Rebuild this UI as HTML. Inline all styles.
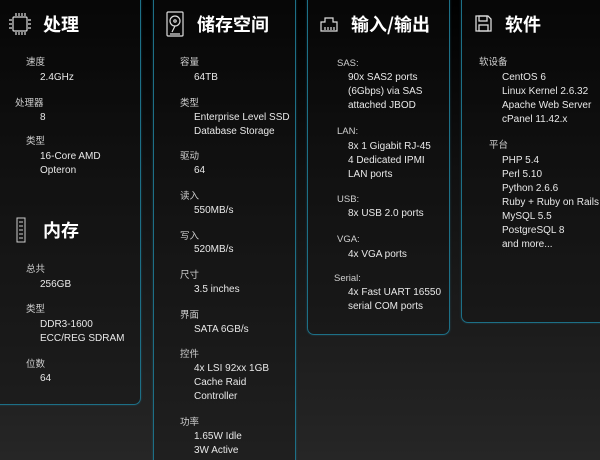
<!DOCTYPE html>
<html><head><meta charset="utf-8"><style>
*{margin:0;padding:0;box-sizing:border-box}
html{width:600px;height:460px;overflow:hidden;background:#1a1a1a}
body{width:600px;height:460px;overflow:hidden;background:linear-gradient(#000 0%,#111 40%,#262626 100%);font-family:"Liberation Sans","Noto Sans CJK SC",sans-serif;color:#e6e6e6;position:relative}
.p{position:absolute;border:1px solid #1d6f86;border-top:none;border-radius:0 0 7px 7px;background:rgba(20,20,20,0.35);box-shadow:0 0 2px rgba(40,130,160,.4)}
.t{position:absolute;font-size:10px;line-height:14px;white-space:nowrap}
.l{color:#cfcfcf;font-size:9.5px}
.v{color:#e8e8e8}
.h{position:absolute;font-size:18px;font-weight:bold;color:#fff;line-height:24px;font-family:"Noto Sans CJK SC",sans-serif}
svg{position:absolute}
</style></head><body>
<div class="p" style="left:-10px;top:-2px;width:151px;height:407px"></div>
<div class="p" style="left:153px;top:-2px;width:143px;height:470px;border-radius:0"></div>
<div class="p" style="left:307px;top:-2px;width:143px;height:337px"></div>
<div class="p" style="left:461px;top:-2px;width:150px;height:325px"></div>

<svg style="left:9px;top:12px" width="22" height="24" viewBox="0 0 22 24" fill="none" stroke="#ddd" stroke-width="1.2"><rect x="4" y="5" width="14" height="14" rx="1"/><path d="M7 1v3M10 1v3M13 1v3M16 1v3M7 20v3M10 20v3M13 20v3M16 20v3M0 8h3M0 12h3M0 16h3M19 8h3M19 12h3M19 16h3"/></svg>
<svg style="left:166px;top:11px" width="18" height="26" viewBox="0 0 18 26" fill="none" stroke="#ddd" stroke-width="1.2"><rect x="1" y="1" width="16" height="24" rx="1"/><circle cx="9" cy="10" r="5"/><circle cx="9" cy="10" r="1.2"/><path d="M9 15l-3 6M4 23h10"/></svg>
<svg style="left:320px;top:16px" width="18" height="16" viewBox="0 0 18 16" fill="none" stroke="#ddd" stroke-width="1.2"><path d="M1 15V6h4V2h8v4h4v9z"/><path d="M5 11v3M8 11v3M11 11v3M14 11v3"/></svg>
<svg style="left:475px;top:15px" width="17" height="17" viewBox="0 0 17 17" fill="none" stroke="#ddd" stroke-width="1.3"><path d="M1 1h12l3 3v12H1z"/><rect x="4" y="1" width="8" height="5"/><rect x="4" y="10" width="9" height="6"/></svg>
<svg style="left:16px;top:217px" width="10" height="26" viewBox="0 0 10 26" fill="none" stroke="#ccc" stroke-width="1"><rect x="1" y="1" width="8" height="24"/><path d="M3 5h4M3 9h4M3 13h4M3 17h4M3 21h4"/></svg>

<div class="h" style="left:43px;top:12px">处理</div>
<div class="h" style="left:197px;top:12px">储存空间</div>
<div class="h" style="left:351px;top:12px">输入/输出</div>
<div class="h" style="left:505px;top:12px">软件</div>
<div class="h" style="left:43px;top:218px">内存</div>

<div class="t l" style="left:26px;top:56px">速度</div>
<div class="t v" style="left:40px;top:71px">2.4GHz</div>
<div class="t l" style="left:15px;top:97px">处理器</div>
<div class="t v" style="left:40px;top:111px">8</div>
<div class="t l" style="left:26px;top:135px">类型</div>
<div class="t v" style="left:40px;top:150px">16-Core AMD<br>Opteron</div>
<div class="t l" style="left:26px;top:263px">总共</div>
<div class="t v" style="left:40px;top:278px">256GB</div>
<div class="t l" style="left:26px;top:303px">类型</div>
<div class="t v" style="left:40px;top:318px">DDR3-1600<br>ECC/REG SDRAM</div>
<div class="t l" style="left:26px;top:358px">位数</div>
<div class="t v" style="left:40px;top:372px">64</div>

<div class="t l" style="left:180px;top:56px">容量</div>
<div class="t v" style="left:194px;top:71px">64TB</div>
<div class="t l" style="left:180px;top:97px">类型</div>
<div class="t v" style="left:194px;top:111px">Enterprise Level SSD<br>Database Storage</div>
<div class="t l" style="left:180px;top:150px">驱动</div>
<div class="t v" style="left:194px;top:164px">64</div>
<div class="t l" style="left:180px;top:190px">读入</div>
<div class="t v" style="left:194px;top:204px">550MB/s</div>
<div class="t l" style="left:180px;top:230px">写入</div>
<div class="t v" style="left:194px;top:243px">520MB/s</div>
<div class="t l" style="left:180px;top:269px">尺寸</div>
<div class="t v" style="left:194px;top:283px">3.5 inches</div>
<div class="t l" style="left:180px;top:309px">界面</div>
<div class="t v" style="left:194px;top:323px">SATA 6GB/s</div>
<div class="t l" style="left:180px;top:348px">控件</div>
<div class="t v" style="left:194px;top:362px">4x LSI 92xx 1GB<br>Cache Raid<br>Controller</div>
<div class="t l" style="left:180px;top:416px">功率</div>
<div class="t v" style="left:194px;top:430px">1.65W Idle<br>3W Active</div>

<div class="t l" style="left:337px;top:57px">SAS:</div>
<div class="t v" style="left:348px;top:71px">90x SAS2 ports<br>(6Gbps) via SAS<br>attached JBOD</div>
<div class="t l" style="left:337px;top:125px">LAN:</div>
<div class="t v" style="left:348px;top:140px">8x 1 Gigabit RJ-45<br>4 Dedicated IPMI<br>LAN ports</div>
<div class="t l" style="left:337px;top:193px">USB:</div>
<div class="t v" style="left:348px;top:207px">8x USB 2.0 ports</div>
<div class="t l" style="left:337px;top:233px">VGA:</div>
<div class="t v" style="left:348px;top:248px">4x VGA ports</div>
<div class="t l" style="left:334px;top:272px">Serial:</div>
<div class="t v" style="left:348px;top:286px">4x Fast UART 16550<br>serial COM ports</div>

<div class="t l" style="left:479px;top:56px">软设备</div>
<div class="t v" style="left:502px;top:71px">CentOS 6<br>Linux Kernel 2.6.32<br>Apache Web Server<br>cPanel 11.42.x</div>
<div class="t l" style="left:489px;top:139px">平台</div>
<div class="t v" style="left:502px;top:154px">PHP 5.4<br>Perl 5.10<br>Python 2.6.6<br>Ruby + Ruby on Rails<br>MySQL 5.5<br>PostgreSQL 8<br>and more...</div>
</body></html>
